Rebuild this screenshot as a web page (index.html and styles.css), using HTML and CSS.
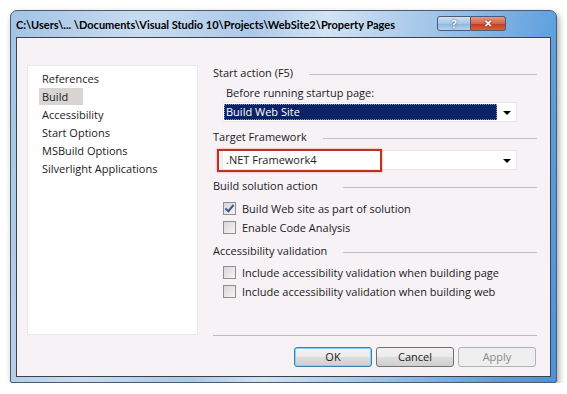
FILE: index.html
```html
<!DOCTYPE html>
<html lang="en">

<head>
    <meta charset="UTF-8">
    <title>Property Pages</title>
    <link rel="stylesheet" href="styles.css">
</head>

<body>
    <div class="window">
        <div class="titlebar">
            <div class="title">C:\Users\... \Documents\Visual Studio 10\Projects\WebSite2\Property Pages</div>
            <div class="caption-btn help">?</div>
            <div class="caption-btn close">✕</div>
        </div>
        <div class="client">
            <div class="main">
                <ul class="nav">
                    <li><span>References</span></li>
                    <li><span class="selected">Build</span></li>
                    <li><span>Accessibility</span></li>
                    <li><span>Start Options</span></li>
                    <li><span>MSBuild Options</span></li>
                    <li><span>Silverlight Applications</span></li>
                </ul>
                <div class="pane">
                    <div class="group">Start action (F5)</div>
                    <div class="label">Before running startup page:</div>
                    <div class="combo startup">
                        <div class="combo-value active"><span>Build Web Site</span></div>
                        <div class="combo-arrow"></div>
                    </div>

                    <div class="group target">Target Framework</div>
                    <div class="combo framework">
                        <div class="combo-value">.NET Framework4</div>
                        <div class="combo-arrow"></div>
                        <div class="mark"></div>
                    </div>

                    <div class="group wide solution">Build solution action</div>
                    <div class="checks">
                        <div class="check"><span class="box checked"></span>Build Web site as part of solution</div>
                        <div class="check"><span class="box"></span>Enable Code Analysis</div>
                    </div>

                    <div class="group wide">Accessibility validation</div>
                    <div class="checks last">
                        <div class="check"><span class="box"></span>Include accessibility validation when building page</div>
                        <div class="check"><span class="box"></span>Include accessibility validation when building web</div>
                    </div>
                </div>
            </div>
            <div class="buttons">
                <button class="btn default">OK</button>
                <button class="btn">Cancel</button>
                <button class="btn disabled">Apply</button>
            </div>
        </div>
    </div>
</body>

</html>
```

FILE: styles.css
```css
body {
    margin: 0;
    background: #fff;
    font-family: "Open Sans", "Noto Sans", sans-serif;
    font-size: 11px;
    color: #1b1b1b;
}
.window {
    box-sizing: border-box;
    margin: 10px 0 0 10px;
    width: 547px;
    height: 373px;
    border: 1px solid #4d5b6b;
    border-radius: 7px 7px 2px 2px;
    background: linear-gradient(100deg, #a3c3e6 0%, #c8dcf0 22%, #abc9e9 40%, #d2e3f4 52%, #a0c4e8 70%, #5d9fdf 90%, #4a93dc 100%);
    box-shadow: 2px 3px 6px rgba(0, 0, 0, 0.35);
    display: flex;
    flex-direction: column;
}
.titlebar {
    height: 26px;
    display: flex;
    align-items: flex-start;
    padding: 0 50px 0 5px;
}
.title {
    flex: 1;
    font-family: Lato, "Open Sans", sans-serif;
    font-weight: bold;
    font-size: 11px;
    line-height: 16px;
    margin-top: 6px;
    white-space: nowrap;
    color: #000;
}
.caption-btn {
    box-sizing: border-box;
    width: 34px;
    height: 15px;
    margin-top: 5px;
    border: 1px solid #4b5a72;
    color: #fff;
    font-size: 11px;
    font-weight: bold;
    line-height: 13px;
    text-align: center;
    text-shadow: 0 0 2px #333;
}
.help {
    border-radius: 3px 0 0 3px;
    background: linear-gradient(#cfe0f2, #a7c5e6 50%, #8db4de 51%, #b5d2ee);
}
.close {
    width: 35px;
    border-left: none;
    border-radius: 0 3px 3px 0;
    background: linear-gradient(#e49a88, #d2634c 50%, #c03a20 51%, #d7623f);
    font-size: 10px;
}
.client {
    box-sizing: border-box;
    flex: 1;
    margin: 0 5px 5px;
    border: 1px solid #3e4148;
    background: #f6f2f6;
    padding: 27px 13px 0 10px;
}
.main {
    display: flex;
    height: 271px;
}
.nav {
    list-style: none;
    margin: 0;
    padding: 4px 0 0 14px;
    width: 171px;
    height: 270px;
    background: #fff;
    border: 1px solid #ebe8eb;
    box-sizing: border-box;
}
.nav li {
    height: 18px;
    line-height: 18px;
}
.nav span {
    display: inline-block;
    padding: 0 3px;
    margin-left: -3px;
    line-height: 17px;
}
.nav .selected {
    background: #d8d5d3;
    padding-right: 15px;
}
.pane {
    flex: 1;
    margin-left: 15px;
    border-bottom: 1px solid #bdb9bd;
}
.group {
    display: flex;
    align-items: center;
    gap: 16px;
    height: 16px;
    line-height: 16px;
    white-space: nowrap;
}
.group::after {
    content: "";
    flex: 1;
    border-top: 1px solid #c3bfc3;
    margin-top: 2px;
}
.group.wide {
    display: grid;
    grid-template-columns: 114px 1fr;
    gap: 16px;
}
.label {
    margin: 4px 0 0 13px;
    line-height: 16px;
}
.combo {
    position: relative;
    display: flex;
    margin: 1px 20px 0 9px;
    height: 20px;
    background: #fff;
    border: 1px solid #e9e6e9;
    box-sizing: border-box;
}
.combo-value {
    flex: 1;
    line-height: 18px;
    padding-left: 3px;
}
.combo-value.active {
    padding: 1px 0 1px 1px;
}
.combo-value.active span {
    display: block;
    height: 16px;
    line-height: 15px;
    padding-left: 2px;
    background: #0b2264;
    color: #fff;
    outline: 1px dotted #8a93b0;
    outline-offset: -1px;
}
.combo-arrow {
    width: 19px;
    position: relative;
}
.combo-arrow::after {
    content: "";
    position: absolute;
    left: 6px;
    top: 8px;
    border-left: 4px solid transparent;
    border-right: 4px solid transparent;
    border-top: 4px solid #000;
}
.group.target { margin-top: 7px; }
.framework { margin-top: 5px; }
.mark {
    position: absolute;
    left: -6px;
    top: -2px;
    width: 165px;
    height: 23px;
    border: 2px solid #b93222;
    box-shadow: 0 0 2px #e88;
    box-sizing: border-box;
}
.group.solution { margin-top: 8px; }
.checks {
    padding: 5px 0 6px 10px;
}
.checks.last { padding-top: 4px; }
.check {
    display: flex;
    align-items: center;
    height: 19px;
    line-height: 16px;
}
.box {
    box-sizing: border-box;
    width: 13px;
    height: 13px;
    margin-right: 6px;
    border: 1px solid #8f8f8f;
    background: linear-gradient(135deg, #d8d8d8, #f4f4f4);
    position: relative;
    flex: none;
}
.checked::after {
    content: "";
    position: absolute;
    left: 3px;
    top: 0px;
    width: 3px;
    height: 7px;
    border-right: 2px solid #3a5791;
    border-bottom: 2px solid #3a5791;
    transform: rotate(40deg);
}
.buttons {
    display: flex;
    justify-content: flex-end;
    gap: 4px;
    margin-top: 11px;
    padding-right: 1px;
}
.btn {
    box-sizing: border-box;
    width: 78px;
    height: 20px;
    border: 1px solid #707070;
    border-radius: 3px;
    background: linear-gradient(#f2f2f2, #ebebeb 50%, #dddddd 51%, #cfcfcf);
    font-family: inherit;
    font-size: 11px;
    color: #1b1b1b;
    padding: 0;
    line-height: 16px;
}
.btn.default {
    border-color: #3c7fb1;
    box-shadow: inset 0 0 0 1px #7fd6f7;
}
.btn.disabled {
    border-color: #adb2b5;
    background: #f0eff0;
    color: #8a8a8a;
}
```
